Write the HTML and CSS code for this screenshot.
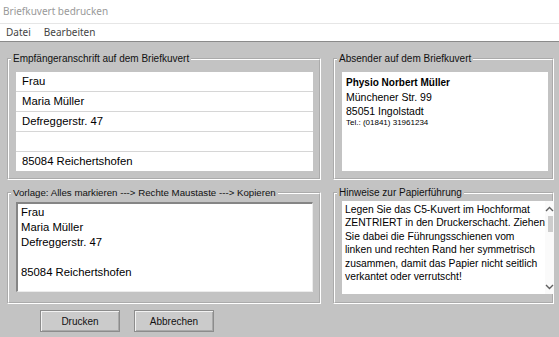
FILE: index.html
```html
<!DOCTYPE html>
<html lang="de">
<head>
    <meta charset="UTF-8">
    <meta name="viewport" content="width=device-width, initial-scale=1.0">
    <title>Briefkuvert bedrucken</title>
    <link rel="stylesheet" href="styles.css">
</head>
<body>
    <div class="window">
        <div class="titlebar">Briefkuvert bedrucken</div>
        <div class="menubar">
            <span class="menu-item">Datei</span>
            <span class="menu-item">Bearbeiten</span>
        </div>
        <div class="client">
            <fieldset class="group recipient">
                <legend>Empfängeranschrift auf dem Briefkuvert</legend>
                <div class="field">Frau</div>
                <div class="field">Maria Müller</div>
                <div class="field">Defreggerstr. 47</div>
                <div class="field"></div>
                <div class="field">85084 Reichertshofen</div>
            </fieldset>

            <fieldset class="group sender">
                <legend>Absender auf dem Briefkuvert</legend>
                <div class="sender-box">
                    <div class="sender-name">Physio Norbert Müller</div>
                    <div>Münchener Str. 99</div>
                    <div>85051 Ingolstadt</div>
                    <div class="sender-phone">Tel.: (01841) 31961234</div>
                </div>
            </fieldset>

            <fieldset class="group template">
                <legend>Vorlage: Alles markieren ---&gt; Rechte Maustaste ---&gt; Kopieren</legend>
                <div class="template-box">
                    Frau<br>
                    Maria Müller<br>
                    Defreggerstr. 47<br>
                    <br>
                    85084 Reichertshofen
                </div>
            </fieldset>

            <fieldset class="group hints">
                <legend>Hinweise zur Papierführung</legend>
                <div class="hints-box">
                    <div class="hints-text">
                        Legen Sie das C5-Kuvert im Hochformat<br>
                        ZENTRIERT in den Druckerschacht. Ziehen<br>
                        Sie dabei die Führungsschienen vom<br>
                        linken und rechten Rand her symmetrisch<br>
                        zusammen, damit das Papier nicht seitlich<br>
                        verkantet oder verrutscht!
                    </div>
                    <div class="scrollbar">
                        <div class="scroll-arrow">
                            <svg width="9" height="6" viewBox="0 0 9 6"><polyline points="1,5 4.5,1.5 8,5" fill="none" stroke="#606060" stroke-width="1.4"/></svg>
                        </div>
                        <div class="scroll-track">
                            <div class="scroll-thumb"></div>
                        </div>
                        <div class="scroll-arrow">
                            <svg width="9" height="6" viewBox="0 0 9 6"><polyline points="1,1 4.5,4.5 8,1" fill="none" stroke="#606060" stroke-width="1.4"/></svg>
                        </div>
                    </div>
                </div>
            </fieldset>

            <div class="buttons">
                <button class="btn">Drucken</button>
                <button class="btn">Abbrechen</button>
            </div>
        </div>
    </div>
</body>
</html>
```

FILE: styles.css
```css
body {
    margin: 0;
    font-family: 'Liberation Sans', Arial, sans-serif;
    color: #000;
    background-color: #c3c3c3;
}

.window {
    width: 559px;
    height: 337px;
    overflow: hidden;
    display: flex;
    flex-direction: column;
}

.titlebar {
    height: 23px;
    line-height: 23px;
    padding-left: 3px;
    background-color: #fff;
    color: #999;
    font-family: 'Noto Sans', sans-serif;
    font-size: 10px;
}

.menubar {
    height: 17px;
    line-height: 17px;
    background-color: #fff;
    border-top: 1px solid #e6e6e6;
    border-bottom: 1px solid #8a8a8a;
    padding-left: 6px;
    display: flex;
    gap: 13px;
    font-family: 'Noto Sans', sans-serif;
    font-size: 10px;
    color: #444;
}

.client {
    flex: 1;
    background-color: #c3c3c3;
    padding: 11px 0 0 7px;
    display: grid;
    grid-template-columns: 314px 221px;
    grid-template-rows: auto auto auto;
    column-gap: 12px;
    row-gap: 7px;
    align-content: start;
}

.group {
    margin: 0;
    min-width: 0;
    border: 2px groove #ffffff;
    padding: 7px 6px 7px 7px;
}

.group legend {
    font-size: 10px;
    line-height: 12px;
    padding: 0 2px;
    margin-left: -5px;
    color: #111;
}

.template legend {
    font-size: 9.7px;
}

.field {
    height: 19px;
    line-height: 19px;
    padding-left: 6px;
    background-color: #fff;
    border-bottom: 1px solid #d6d6d6;
    font-size: 11.3px;
}

.field:last-child {
    border-bottom: none;
}

.sender {
    padding-right: 4px;
}

.sender-box {
    height: 99px;
    box-sizing: border-box;
    background-color: #fff;
    padding: 4px 0 0 4px;
    font-size: 10.5px;
    line-height: 14px;
}

.sender-name {
    font-weight: bold;
    font-size: 10px;
}

.sender-phone {
    font-size: 8px;
    line-height: 9px;
}

.template {
    padding-top: 3px;
    padding-bottom: 9px;
}

.template-box {
    height: 90px;
    box-sizing: border-box;
    background-color: #fff;
    border-top: 2px solid #858585;
    border-left: 2px solid #858585;
    border-right: 1px solid #ececec;
    border-bottom: 1px solid #ececec;
    padding: 1px 0 0 3px;
    font-size: 11.3px;
    line-height: 15px;
}

.hints {
    padding: 2px 4px 8px 7px;
}

.hints-box {
    height: 93px;
    background-color: #fff;
    display: flex;
}

.hints-text {
    flex: 1;
    padding: 2px 0 0 3px;
    font-size: 10.3px;
    line-height: 13.4px;
    white-space: nowrap;
}

.scrollbar {
    width: 16px;
    display: flex;
    flex-direction: column;
    background-color: #fafafa;
}

.scroll-arrow {
    height: 15px;
    display: flex;
    align-items: center;
    justify-content: center;
}

.scroll-track {
    flex: 1;
    padding: 0 1px 0 3px;
}

.scroll-thumb {
    height: 16px;
    background-color: #cdcdcd;
}

.buttons {
    grid-column: 1;
    padding-left: 33px;
    margin-top: -1px;
    display: flex;
    gap: 14px;
}

.btn {
    width: 80px;
    height: 22px;
    font-family: 'Liberation Sans', Arial, sans-serif;
    font-size: 10px;
    color: #111;
    background-color: #cbcbcb;
    border: 1px solid #8c8c8c;
    box-shadow: inset 1px 1px 0 #f2f2f2, inset -1px -1px 0 #a9a9a9;
    padding: 0;
}
```
